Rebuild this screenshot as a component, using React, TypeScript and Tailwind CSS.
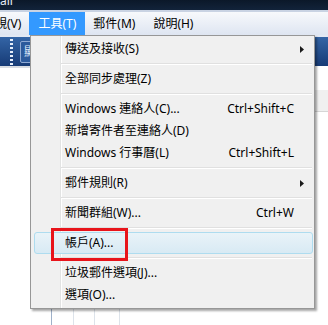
// Windows Mail 的「工具」下拉選單截圖重建
import React from 'react'

type MenuEntry =
  | { label: string; shortcut?: string; sub?: boolean; active?: boolean }
  | 'sep'

const entries: MenuEntry[] = [
  { label: '傳送及接收(S)', sub: true },
  'sep',
  { label: '全部同步處理(Z)' },
  'sep',
  { label: 'Windows 連絡人(C)...', shortcut: 'Ctrl+Shift+C' },
  { label: '新增寄件者至連絡人(D)' },
  { label: 'Windows 行事曆(L)', shortcut: 'Ctrl+Shift+L' },
  'sep',
  { label: '郵件規則(R)', sub: true },
  'sep',
  { label: '新聞群組(W)...', shortcut: 'Ctrl+W' },
  'sep',
  { label: '帳戶(A)...', active: true },
  'sep',
  { label: '垃圾郵件選項(J)...' },
  { label: '選項(O)...' },
]

const SubArrow = () => (
  <svg width="4" height="7" viewBox="0 0 4 7" className="absolute right-[8px] top-[7px]">
    <path d="M0 0 L4 3.5 L0 7 Z" fill="#1a1a1a" />
  </svg>
)

const ToolsMenu = () => (
  <div className="absolute left-[30px] top-[35px] w-[285px] border border-[#979797] bg-[#f0f0f0] py-[2px] shadow-[2px_2px_2px_rgba(0,0,0,0.35)]">
    {/* 左側圖示欄的分隔線 */}
    <div className="absolute left-[29px] top-0 bottom-0 w-[1px] bg-[#e2e3e3]" />
    <div className="absolute left-[30px] top-0 bottom-0 w-[1px] bg-white" />

    {entries.map((e, i) =>
      e === 'sep' ? (
        <div key={i} className="relative h-[8px] ml-[30px] mr-[2px] flex flex-col justify-center">
          <div className="h-[1px] bg-[#e0e0e0]" />
          <div className="h-[1px] bg-white" />
        </div>
      ) : (
        <div
          key={i}
          className={
            'relative h-[22px] ml-[3px] mr-[1px] pl-[30px] pr-[18px] flex items-center border rounded-[3px] ' +
            (e.active
              ? 'border-[#aedcef] bg-gradient-to-b from-[#e9f3f8] to-[#d8eaf4]'
              : 'border-transparent')
          }
        >
          <span className="flex-1 whitespace-nowrap">{e.label}</span>
          {e.shortcut && <span className="whitespace-nowrap">{e.shortcut}</span>}
          {e.sub && <SubArrow />}
        </div>
      )
    )}
  </div>
)

export default function App() {
  return (
    <div className="relative w-[328px] h-[325px] overflow-hidden bg-white text-[12px] text-black font-['Noto_Sans','Noto_Sans_CJK_TC',sans-serif]">
      {/* 標題列 */}
      <div className="h-[10px] bg-gradient-to-b from-[#0b1829] to-[#12233a] overflow-hidden">
        <div className="-mt-[6px] text-[12px] leading-[14px] text-[#e8eef6]">ail</div>
      </div>
      <div className="h-[2px] bg-[#c9d3e3]" />

      {/* 功能表列 */}
      <div className="h-[23px] flex items-stretch bg-gradient-to-b from-[#f7f9fc] to-[#dee5f1]">
        <div className="-ml-[17px] pr-[8px] flex items-center whitespace-nowrap">檢視(V)</div>
        <div className="px-[9px] flex items-center bg-[#3399ff] text-white whitespace-nowrap">工具(T)</div>
        <div className="px-[8px] flex items-center whitespace-nowrap">郵件(M)</div>
        <div className="px-[8px] ml-[2px] flex items-center whitespace-nowrap">說明(H)</div>
      </div>
      <div className="h-[2px] bg-[#e2e8f3]" />

      {/* 工具列 */}
      <div className="h-[29px] flex items-center bg-gradient-to-b from-[#3465a6] to-[#173b76]">
        <div className="w-[10px]" />
        <div className="w-[3px] h-[26px] bg-[repeating-linear-gradient(to_bottom,#e6eefa_0px,#e6eefa_2px,transparent_2px,transparent_4px)]" />
        <div className="w-[7px]" />
        <div className="h-[22px] w-[40px] rounded-[2px] border border-[#8fa9d3] bg-[#2c5a9c] text-[#dde8f8] flex items-center pl-[3px] whitespace-nowrap">
          顯示
        </div>
      </div>

      {/* 下方內容區 */}
      <div className="flex h-[260px]">
        <div className="w-[30px] border-t-2 border-[#d8dce2]" />
        <div className="flex-1" />
        <div className="w-[14px] flex flex-col">
          <div className="h-[24px] bg-white" />
          <div className="h-[22px] bg-[#f0f0f0] border-b border-[#d6d6d6]" />
        </div>
      </div>

      {/* 底部格線 */}
      <div className="absolute left-[51px] top-[308px] flex">
        <div className="w-[1px] h-[20px] bg-[#9fb1c9]" />
        <div className="ml-[21px] w-[1px] h-[20px] bg-[#dde3ea]" />
        <div className="ml-[20px] w-[1px] h-[20px] bg-[#dde3ea]" />
        <div className="ml-[24px] w-[1px] h-[20px] bg-[#dde3ea]" />
      </div>

      <ToolsMenu />

      {/* 紅色標示框 */}
      <div className="absolute left-[51px] top-[228px] w-[77px] h-[33px] border-[3px] border-[#e8141b]" />
    </div>
  )
}
